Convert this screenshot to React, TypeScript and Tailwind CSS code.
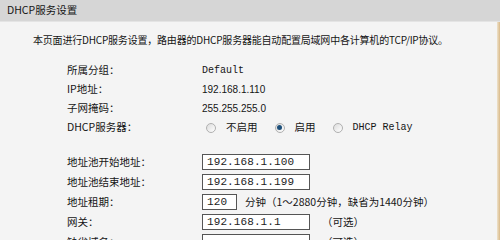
const cjk = "font-['SimSun','Noto_Sans_CJK_SC',sans-serif]";

function Radio({ checked }: { checked?: boolean }) {
  return (
    <span className="w-[10px] h-[10px] rounded-full border border-[#b0b0b0] bg-gradient-to-br from-[#dcdcdc] to-white flex items-center justify-center">
      {checked && <span className="w-[5px] h-[5px] rounded-full bg-[#1d4f7a]" />}
    </span>
  );
}

function Field({ value, w = "w-[108px]" }: { value: string; w?: string }) {
  return (
    <div className={`${w} h-[16px] border border-[#555] bg-white flex items-center px-[4px] font-['Liberation_Mono',monospace] text-[11px] tracking-[0.1px] text-[#222]`}>
      {value}
    </div>
  );
}

function Row({ label, children, h = "h-[20px]" }: { label: string; children?: React.ReactNode; h?: string }) {
  return (
    <div className={`flex items-center ${h}`}>
      <div className="w-[135px] shrink-0">{label}</div>
      <div className="flex items-center">{children}</div>
    </div>
  );
}

export default function App() {
  return (
    <div className={`w-[500px] h-[240px] overflow-hidden bg-[#f4f4f4] text-[#151515] text-[10px] leading-none ${cjk}`}>
      <div className="h-[22px] bg-[#d6d6d6] flex items-center px-[7px] border-b border-[#e4e4e4] text-[10.5px]">
        DHCP服务设置
      </div>
      <div className="flex h-[218px]">
        <div className="flex-1">
          <div className="pl-[33px] h-[36px] flex items-center pb-[1px] tracking-[-0.2px]">
            本页面进行DHCP服务设置，路由器的DHCP服务器能自动配置局域网中各计算机的TCP/IP协议。
          </div>
          <div className="pl-[67px] pt-[3px] text-[10.5px]">
            <Row label="所属分组：" h="h-[19px]">
              <span className="font-['Liberation_Mono',monospace] text-[10px]">Default</span>
            </Row>
            <Row label="IP地址：" h="h-[19px]">
              <span className="font-['Liberation_Sans',sans-serif] text-[10px]">192.168.1.110</span>
            </Row>
            <Row label="子网掩码：" h="h-[19px]">
              <span className="font-['Liberation_Sans',sans-serif] text-[10px]">255.255.255.0</span>
            </Row>
            <Row label="DHCP服务器：" h="h-[19px]">
              <div className="flex items-center gap-[10px] pl-[4px]">
                <Radio />
                <span className="mr-[7px]">不启用</span>
                <Radio checked />
                <span className="mr-[7px]">启用</span>
                <Radio />
                <span className="font-['Liberation_Mono',monospace] text-[10px]">DHCP Relay</span>
              </div>
            </Row>
            <div className="h-[15px]" />
            <Row label="地址池开始地址：">
              <Field value="192.168.1.100" />
            </Row>
            <Row label="地址池结束地址：">
              <Field value="192.168.1.199" />
            </Row>
            <Row label="地址租期：">
              <Field value="120" w="w-[35px]" />
              <span className="ml-[8px]">分钟（1～2880分钟，缺省为1440分钟）</span>
            </Row>
            <Row label="网关：">
              <Field value="192.168.1.1" />
              <span className="ml-[12px]">（可选）</span>
            </Row>
            <Row label="缺省域名：">
              <Field value="" />
              <span className="ml-[12px]">（可选）</span>
            </Row>
          </div>
        </div>
        <div className="w-[3px] bg-gradient-to-r from-[#eee2cc] to-[#d9b988]" />
      </div>
    </div>
  );
}
